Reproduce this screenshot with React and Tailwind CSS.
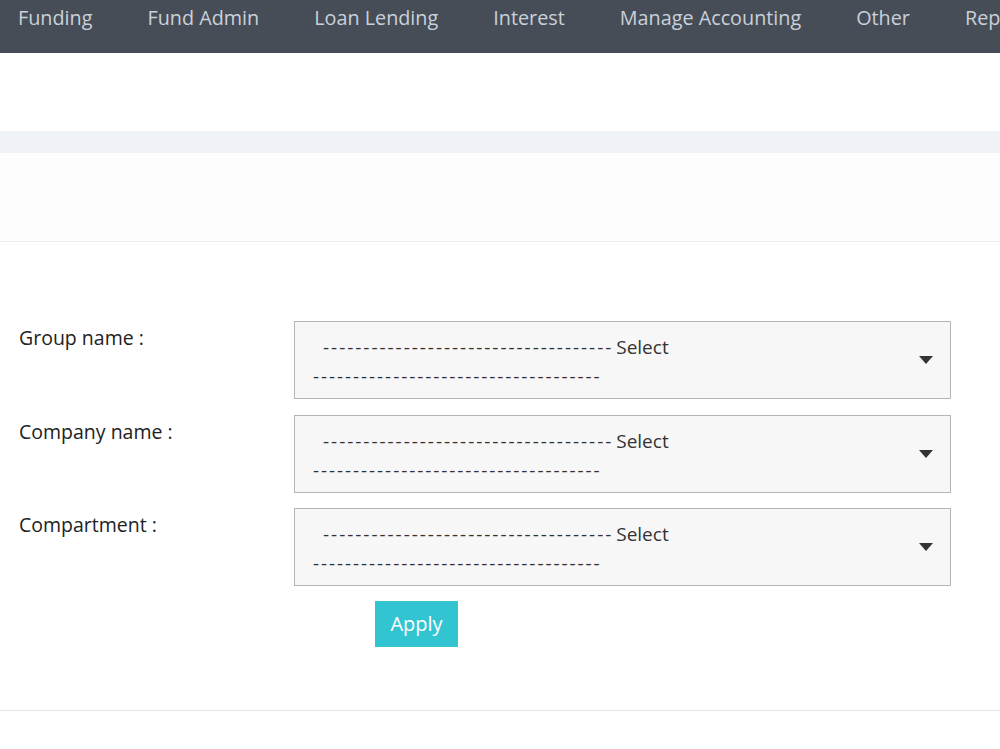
const navItems = ["Funding", "Fund Admin", "Loan Lending", "Interest", "Manage Accounting", "Other", "Reports"];
const fields = ["Group name :", "Company name :", "Compartment :"];

const dashes = "------------------------------------";

function SelectBox() {
    return (
        <div className="relative h-[78px] w-[657px] border border-[#b5b5b5] bg-[#f7f7f7] text-[#333]">
            <div className="pl-[28px] pt-[11px] leading-[29px] text-[19px] tracking-[1.95px] whitespace-nowrap">
                {dashes}<span className="tracking-normal -ml-[2px]"> Select</span>
            </div>
            <div className="pl-[18px] leading-[29px] text-[19px] tracking-[1.9px] whitespace-nowrap">
                {dashes}
            </div>
            <svg className="absolute right-[17px] top-[34px]" width="14" height="8" viewBox="0 0 14 8">
                <path d="M0 0 L14 0 L7 8 Z" fill="#333" />
            </svg>
        </div>
    );
}

export default function App() {
    return (
        <div className="min-h-[749px] w-[1000px] overflow-hidden bg-white" style={{ fontFamily: '"Open Sans", "Noto Sans", sans-serif' }}>
            <nav className="h-[53px] bg-[#474d57] flex gap-[55px] pl-[18px] pt-[3px] whitespace-nowrap overflow-hidden">
                {navItems.map((item) => (
                    <span key={item} className="text-[19.8px] leading-[30px] text-[#c9d1da]">{item}</span>
                ))}
            </nav>
            <div className="h-[78px]" />
            <div className="h-[22px] bg-[#eff2f6]" />
            <div className="h-[89px] bg-[#fdfdfd] border-b border-[#ececec]" />
            <div className="pt-[79px] pb-[63px] border-b border-[#e6e6e6]">
                <div className="flex flex-col gap-[15.5px]">
                    {fields.map((f) => (
                        <div key={f} className="flex">
                            <label className="w-[294px] pl-[19px] pt-[4px] text-[19.5px] leading-[26px] text-[#222]">{f}</label>
                            <SelectBox />
                        </div>
                    ))}
                </div>
                <button className="ml-[375px] mt-[15px] h-[46px] w-[83px] bg-[#33c4d1] text-white text-[20px]">Apply</button>
            </div>
        </div>
    );
}
